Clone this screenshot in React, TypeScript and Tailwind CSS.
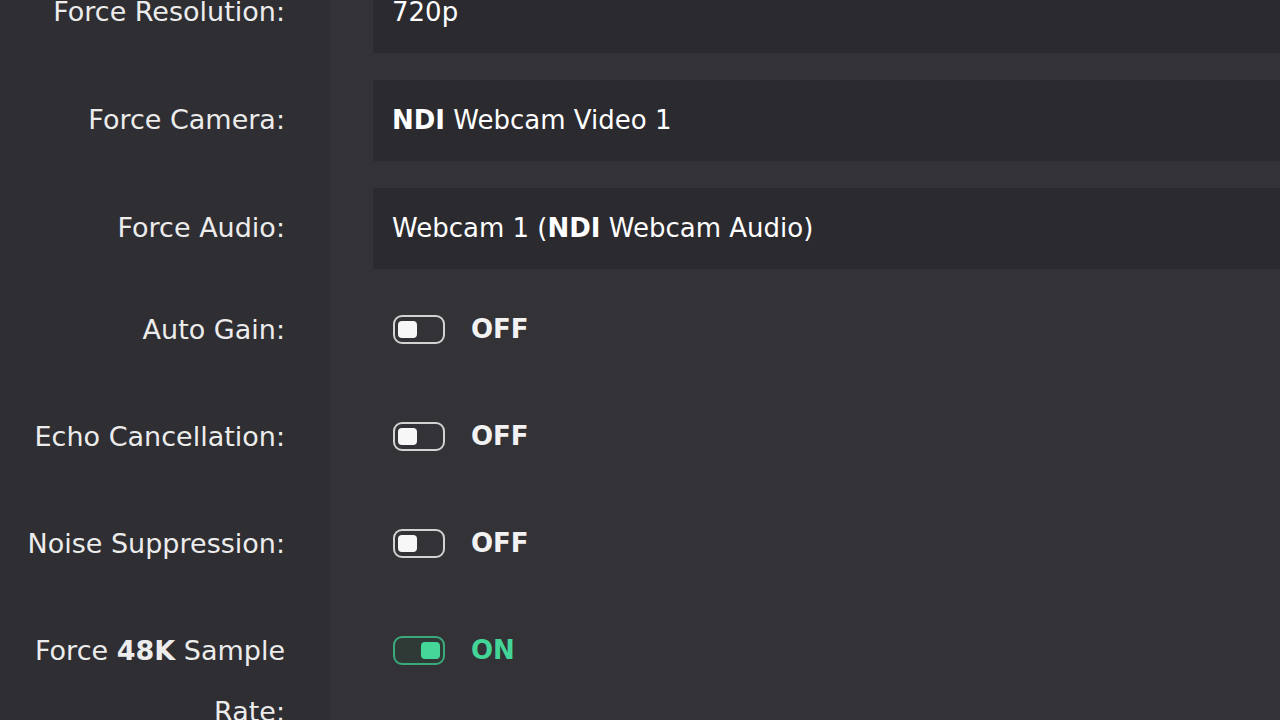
const BOX_ROWS = [
  { label: "Force Resolution:", value: <>720p</> },
  { label: "Force Camera:", value: <><b className="font-bold">NDI</b> Webcam Video 1</> },
  { label: "Force Audio:", value: <>Webcam 1 (<b className="font-bold">NDI</b> Webcam Audio)</> },
]

const TOGGLE_ROWS = [
  { label: <>Auto Gain:</>, on: false },
  { label: <>Echo Cancellation:</>, on: false },
  { label: <>Noise Suppression:</>, on: false },
  { label: <>Force <b className="font-semibold">48K</b> Sample Rate:</>, on: true },
]

function Toggle({ on }: { on: boolean }) {
  return (
    <div className="flex items-center gap-[26px]">
      <div
        className={`flex h-[29px] w-[52px] items-center rounded-[9px] border-2 px-[3px] ${
          on ? "justify-end border-[#3aa97b] bg-[#2f3a36]" : "justify-start border-[#d2d2d2]"
        }`}
      >
        <div className={`h-[17px] w-[19px] rounded-[4px] ${on ? "bg-[#45d699]" : "bg-[#f7f7f7]"}`} />
      </div>
      <span className={`text-[26px] font-bold ${on ? "text-[#43d597]" : "text-[#f2f2f2]"}`}>{on ? "ON" : "OFF"}</span>
    </div>
  )
}

export default function App() {
  return (
    <div
      className="h-[720px] w-[1280px] overflow-hidden bg-[#333237] text-white"
      style={{ fontFamily: '"DejaVu Sans", sans-serif' }}
    >
      <div className="-mt-[42px] flex flex-col">
        {BOX_ROWS.map((r) => (
          <div key={r.label} className="grid h-[108px] grid-cols-[330px_1fr]">
            <div className="flex items-center justify-end bg-[#2f2e33] pr-[45px] text-[27px] text-[#ececec]">{r.label}</div>
            <div className="flex items-center pl-[43px]">
              <div className="flex h-[81px] w-full items-center bg-[#2b2a2f] pl-[19px] text-[26px] text-white">
                <span>{r.value}</span>
              </div>
            </div>
          </div>
        ))}
        {TOGGLE_ROWS.map((r, i) => (
          <div key={i} className="grid min-h-[107px] grid-cols-[330px_1fr]">
            <div className="bg-[#2f2e33] pl-[20px] pr-[45px] pt-[17px] text-right text-[27px] leading-[61px] text-[#ececec]">{r.label}</div>
            <div className="flex h-[78px] items-center pl-[63px] pt-[17px]">
              <Toggle on={r.on} />
            </div>
          </div>
        ))}
      </div>
    </div>
  )
}
